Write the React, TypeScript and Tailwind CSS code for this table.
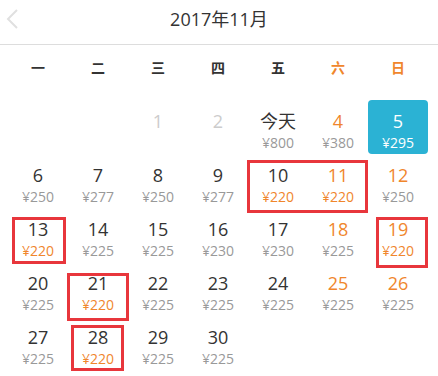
import React from "react"

type Day = { d: number; price?: number; disabled?: boolean; label?: string }

const weekdays = ["一", "二", "三", "四", "五", "六", "日"]

const days: Day[] = [
  { d: 1, disabled: true },
  { d: 2, disabled: true },
  { d: 3, label: "今天", price: 800 },
  { d: 4, price: 380 },
  { d: 5, price: 295 },
  { d: 6, price: 250 },
  { d: 7, price: 277 },
  { d: 8, price: 250 },
  { d: 9, price: 277 },
  { d: 10, price: 220 },
  { d: 11, price: 220 },
  { d: 12, price: 250 },
  { d: 13, price: 220 },
  { d: 14, price: 225 },
  { d: 15, price: 225 },
  { d: 16, price: 230 },
  { d: 17, price: 230 },
  { d: 18, price: 225 },
  { d: 19, price: 220 },
  { d: 20, price: 225 },
  { d: 21, price: 220 },
  { d: 22, price: 225 },
  { d: 23, price: 225 },
  { d: 24, price: 225 },
  { d: 25, price: 225 },
  { d: 26, price: 225 },
  { d: 27, price: 225 },
  { d: 28, price: 220 },
  { d: 29, price: 225 },
  { d: 30, price: 225 },
]

// Nov 1 2017 is a Wednesday
const offset = 2
const selected = 5

// hand-drawn highlight boxes over the calendar
const marks = [
  { left: 247, top: 160, w: 121, h: 53 },
  { left: 12, top: 217, w: 54, h: 47 },
  { left: 376, top: 217, w: 52, h: 51 },
  { left: 67, top: 273, w: 62, h: 48 },
  { left: 71, top: 325, w: 53, h: 46 },
]

function DayCell({ day, col }: { day: Day; col: number }) {
  const weekend = col >= 5
  const isSel = day.d === selected
  const cheap = day.price === 220

  if (isSel) {
    return (
      <div className="h-[54px] rounded-[4px] bg-[#2bb2d4] flex flex-col items-center pt-[11px]">
        <span className="text-[18px] leading-[21px] text-white">{day.d}</span>
        <span className="text-[14px] leading-[21px] text-white">¥{day.price}</span>
      </div>
    )
  }

  return (
    <div className="h-[54px] flex flex-col items-center pt-[11px]">
      <span
        className={`text-[18px] leading-[21px] ${
          day.disabled ? "text-[#cccccc]" : weekend ? "text-[#f0862c]" : "text-[#333333]"
        }`}
      >
        {day.label ?? day.d}
      </span>
      {day.price && (
        <span
          className={`text-[14px] leading-[21px] ${cheap ? "text-[#f0862c]" : "text-[#999999]"}`}
        >
          ¥{day.price}
        </span>
      )}
    </div>
  )
}

export default function App() {
  const cells: (Day | null)[] = [...Array(offset).fill(null), ...days]

  return (
    <div
      className="relative w-[438px] h-[376px] bg-white overflow-hidden"
      style={{ fontFamily: '"Open Sans", "Noto Sans CJK SC", sans-serif' }}
    >
      <div className="relative h-[45px] border-b border-[#dddddd] flex items-center justify-center">
        <svg className="absolute left-[5px] top-[9px]" width="14" height="20" viewBox="0 0 14 20">
          <path d="M12 1 L3 10 L12 19" fill="none" stroke="#e0e0e0" strokeWidth="2" />
        </svg>
        <span className="text-[18px] text-[#333333] pb-[5px]">2017年11月</span>
      </div>

      <div className="grid grid-cols-7 w-[420px] ml-[8px] h-[45px] items-center">
        {weekdays.map((w, i) => (
          <span
            key={w}
            className={`text-center text-[14px] font-bold ${i >= 5 ? "text-[#f0862c]" : "text-[#333333]"}`}
          >
            {w}
          </span>
        ))}
      </div>

      <div className="grid grid-cols-7 w-[420px] ml-[8px] mt-[10px]">
        {cells.map((c, i) =>
          c ? <DayCell key={i} day={c} col={i % 7} /> : <div key={i} className="h-[54px]" />
        )}
      </div>

      {marks.map((m, i) => (
        <div
          key={i}
          className="absolute border-[3px] border-[#e8363c]"
          style={{ left: m.left, top: m.top, width: m.w, height: m.h }}
        />
      ))}
    </div>
  )
}
